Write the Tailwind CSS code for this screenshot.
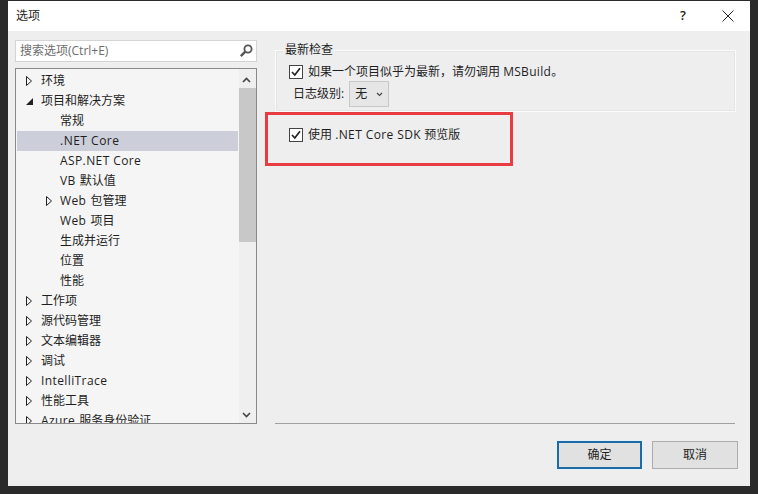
<!doctype html>
<html><head><meta charset="utf-8"><script src="https://cdn.jsdelivr.net/npm/@tailwindcss/browser@4"></script></head>
<body class="bg-[#2a2a2a] w-[758px] h-[494px] overflow-hidden font-['Open_Sans','Noto_Sans_CJK_SC',sans-serif] text-[12px] text-[#1e1e1e]">
<div class="ml-[8px] mt-[1px] w-[742px] h-[485px] bg-[#eeeeef] flex flex-col">
  <header class="h-[30px] bg-white flex items-center pl-[8px] shrink-0">
    <span class="flex-1">选项</span>
    <span class="w-[20px] text-[13px] font-semibold text-center mr-[29px]">?</span>
    <svg class="mr-[16px]" width="12" height="12" viewBox="0 0 12 12"><path d="M.5.5l11 11M11.500.5l-11 11" stroke="#222" fill="none"/></svg>
  </header>
  <main class="flex-1 flex pt-[9px] pl-[7px] min-h-0">
    <aside class="w-[242px] shrink-0 flex flex-col">
      <div class="h-[22px] border border-[#d4d4d6] bg-white flex items-center pl-[4px] pr-[2px] text-[#6d6d6d]">
        <span class="flex-1">搜索选项(Ctrl+E)</span>
        <svg width="16" height="16" viewBox="0 0 16 16"><circle cx="10" cy="6" r="3.6" fill="none" stroke="#555" stroke-width="1.8"/><path d="M7.3 8.7L2.8 13.2" stroke="#555" stroke-width="2.4"/></svg>
      </div>
      <div class="mt-[6px] h-[356px] border border-[#8a8a8c] bg-[#f5f5f5] flex overflow-hidden">
        <ul class="w-[223px] pt-[2px] pl-[1px] pr-[1px] shrink-0">
          <li class="h-[20px] flex items-center pl-[9px]"><svg class="mr-[9px]" width="6" height="10" viewBox="0 0 6 10"><path d="M.5.5l5 4.500-5 4.500z" fill="none" stroke="#222"/></svg>环境</li>
          <li class="h-[20px] flex items-center pl-[9px]"><svg class="mr-[8px]" width="7" height="7" viewBox="0 0 7 7"><path d="M7 0v7H0z" fill="#222"/></svg>项目和解决方案</li>
          <li class="h-[20px] flex items-center pl-[43px]">常规</li>
          <li class="h-[20px] flex items-center pl-[43px] bg-[#ccced9] tracking-[0.5px]">.NET Core</li>
          <li class="h-[20px] flex items-center pl-[43px] tracking-[0.4px]">ASP.NET Core</li>
          <li class="h-[20px] flex items-center pl-[43px]"><span class="tracking-[0.4px] mr-[4px]">VB</span>默认值</li>
          <li class="h-[20px] flex items-center pl-[29px]"><svg class="mr-[8px]" width="6" height="10" viewBox="0 0 6 10"><path d="M.5.5l5 4.500-5 4.500z" fill="none" stroke="#222"/></svg><span class="tracking-[0.4px] mr-[4px]">Web</span>包管理</li>
          <li class="h-[20px] flex items-center pl-[43px]"><span class="tracking-[0.4px] mr-[4px]">Web</span>项目</li>
          <li class="h-[20px] flex items-center pl-[43px]">生成并运行</li>
          <li class="h-[20px] flex items-center pl-[43px]">位置</li>
          <li class="h-[20px] flex items-center pl-[43px]">性能</li>
          <li class="h-[20px] flex items-center pl-[9px]"><svg class="mr-[9px]" width="6" height="10" viewBox="0 0 6 10"><path d="M.5.5l5 4.500-5 4.500z" fill="none" stroke="#222"/></svg>工作项</li>
          <li class="h-[20px] flex items-center pl-[9px]"><svg class="mr-[9px]" width="6" height="10" viewBox="0 0 6 10"><path d="M.5.5l5 4.500-5 4.500z" fill="none" stroke="#222"/></svg>源代码管理</li>
          <li class="h-[20px] flex items-center pl-[9px]"><svg class="mr-[9px]" width="6" height="10" viewBox="0 0 6 10"><path d="M.5.5l5 4.500-5 4.500z" fill="none" stroke="#222"/></svg>文本编辑器</li>
          <li class="h-[20px] flex items-center pl-[9px]"><svg class="mr-[9px]" width="6" height="10" viewBox="0 0 6 10"><path d="M.5.5l5 4.500-5 4.500z" fill="none" stroke="#222"/></svg>调试</li>
          <li class="h-[20px] flex items-center pl-[9px] tracking-[0.4px]"><svg class="mr-[9px]" width="6" height="10" viewBox="0 0 6 10"><path d="M.5.5l5 4.500-5 4.500z" fill="none" stroke="#222"/></svg>IntelliTrace</li>
          <li class="h-[20px] flex items-center pl-[9px]"><svg class="mr-[9px]" width="6" height="10" viewBox="0 0 6 10"><path d="M.5.5l5 4.500-5 4.500z" fill="none" stroke="#222"/></svg>性能工具</li>
          <li class="h-[20px] flex items-center pl-[9px]"><svg class="mr-[9px]" width="6" height="10" viewBox="0 0 6 10"><path d="M.5.5l5 4.500-5 4.500z" fill="none" stroke="#222"/></svg><span class="tracking-[0.4px] mr-[4px]">Azure</span>服务身份验证</li>
        </ul>
        <div class="w-[17px] bg-[#efefef] flex flex-col items-center">
          <svg class="mt-[8px] mb-[5px] mr-[3px]" width="9" height="6" viewBox="0 0 9 6"><path d="M1 5l3.500-3.500L8 5" fill="none" stroke="#444" stroke-width="1.600"/></svg>
          <div class="w-full h-[154px] bg-[#c8c8c8]"></div>
          <div class="flex-1"></div>
          <svg class="mb-[5px] mr-[3px]" width="9" height="6" viewBox="0 0 9 6"><path d="M1 1l3.500 3.500L8 1" fill="none" stroke="#444" stroke-width="1.600"/></svg>
        </div>
      </div>
    </aside>
    <section class="ml-[9px] w-[471px] h-[384px] flex flex-col">
      <div class="relative mt-[10px] ml-[9px] w-[461px] h-[62px] shrink-0 border border-[#fbfbfb] outline outline-[#e4e4e4] -outline-offset-2 pt-[11px]">
        <span class="absolute -top-[10px] left-[8px] px-[1px] bg-[#eeeeef] leading-[18px]">最新检查</span>
        <div class="flex items-center h-[20px] pl-[13px] gap-[5px]">
          <span class="w-[14px] h-[14px] border border-[#444] bg-white flex items-center justify-center"><svg width="12" height="12" viewBox="0 0 12 12"><path d="M2 6l2.800 3L10 2.300" fill="none" stroke="#222" stroke-width="1.700"/></svg></span>
          <span>如果一个项目似乎为最新，请勿调用 <span class="tracking-[0.3px]">MSBuild</span>。</span>
        </div>
        <div class="flex items-center h-[26px] -mt-[1px] pl-[17px]">
          <span>日志级别:</span>
          <span class="ml-[5px] w-[40px] h-[26px] border border-[#c8c8c8] bg-[#e6e6e6] flex items-center pl-[5px] gap-[9px]">无<svg width="7" height="5" viewBox="0 0 7 5"><path d="M1 1l2.500 2.500L6 1" fill="none" stroke="#444" stroke-width="1.200"/></svg></span>
        </div>
      </div>
      <div class="-ml-[1px] w-[248px] h-[54px] shrink-0 border-[3px] border-[#e83b42] flex pt-[13px] pl-[21px] gap-[5px] items-start">
        <span class="w-[14px] h-[14px] border border-[#444] bg-white flex items-center justify-center shrink-0"><svg width="12" height="12" viewBox="0 0 12 12"><path d="M2 6l2.800 3L10 2.300" fill="none" stroke="#222" stroke-width="1.700"/></svg></span>
        <span class="leading-[14px]">使用 <span class="tracking-[0.4px]">.NET Core SDK</span> 预览版</span>
      </div>
      <div class="flex-1"></div>
      <div class="ml-[9px] w-[460px] h-[1px] bg-[#a0a0a0]"></div>
    </section>
  </main>
  <footer class="h-[62px] shrink-0 flex justify-end gap-[10px] pt-[17px] pr-[12px]">
    <button class="w-[85px] h-[28px] border-2 border-[#1d6aa5] bg-[#e1e1e1] shadow-[0_0_0_1px_#e1f1fb]">确定</button>
    <button class="w-[86px] h-[28px] border border-[#adadad] bg-[#e1e1e1]">取消</button>
  </footer>
</div>
</body></html>
